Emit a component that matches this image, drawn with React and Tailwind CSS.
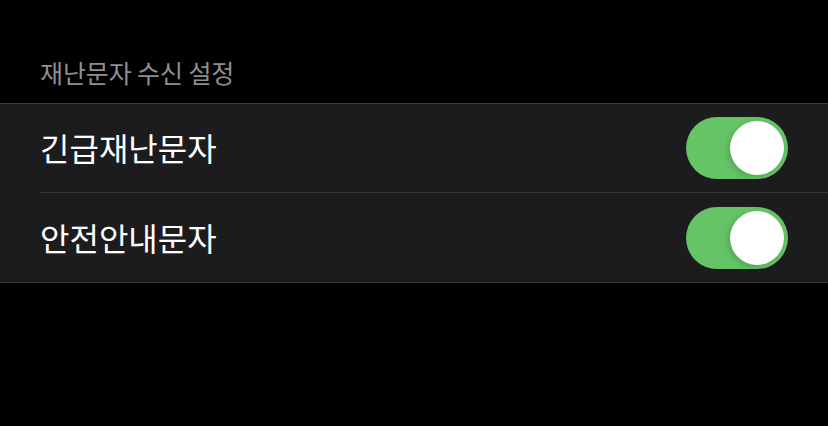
export default function App() {
  const Toggle = () => (
    <div className="relative w-[102px] h-[62px] rounded-full bg-[#65c466] shrink-0">
      <div className="absolute right-[4px] top-[4px] w-[54px] h-[54px] rounded-full bg-white shadow-[-2px_2px_6px_rgba(0,0,0,0.18)]" />
    </div>
  );
  return (
    <div className="w-[828px] h-[426px] bg-black font-['Noto_Sans_CJK_KR','Noto_Sans',sans-serif]">
      <div className="h-[103px] flex items-center pt-[42px] pl-[40px]">
        <span className="text-[25px] leading-none text-[#8e8e93] tracking-[-0.1px]">재난문자 수신 설정</span>
      </div>
      <div className="border-t border-b border-[#38383a] bg-[#1c1c1e]">
        <div className="h-[88px] flex items-center justify-between pl-[40px] pr-[40px]">
          <span className="text-[32px] leading-none text-white -mt-[2px]">긴급재난문자</span>
          <Toggle />
        </div>
        <div className="ml-[40px] h-px bg-[#38383a]" />
        <div className="h-[89px] flex items-center justify-between pl-[40px] pr-[40px]">
          <span className="text-[32px] leading-none text-white -mt-[2px]">안전안내문자</span>
          <Toggle />
        </div>
      </div>
    </div>
  );
}
